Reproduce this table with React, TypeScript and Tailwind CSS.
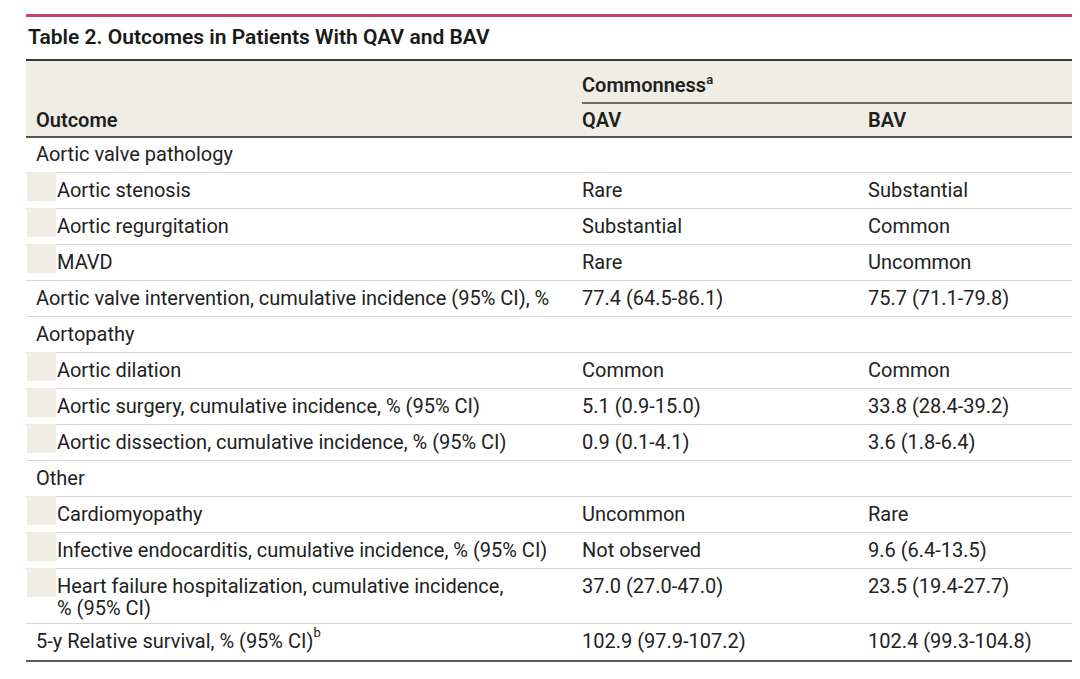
import React from "react";

type Row = {
  label: React.ReactNode;
  qav?: string;
  bav?: string;
  indent?: boolean;
  h: string;
  two?: boolean;
  last?: boolean;
};

const rows: Row[] = [
  { label: "Aortic valve pathology", h: "h-[35px]" },
  { label: "Aortic stenosis", qav: "Rare", bav: "Substantial", indent: true, h: "h-[36px]" },
  { label: "Aortic regurgitation", qav: "Substantial", bav: "Common", indent: true, h: "h-[36px]" },
  { label: "MAVD", qav: "Rare", bav: "Uncommon", indent: true, h: "h-[36px]" },
  {
    label: "Aortic valve intervention, cumulative incidence (95% CI), %",
    qav: "77.4 (64.5-86.1)",
    bav: "75.7 (71.1-79.8)",
    h: "h-[36px]",
  },
  { label: "Aortopathy", h: "h-[36px]" },
  { label: "Aortic dilation", qav: "Common", bav: "Common", indent: true, h: "h-[36px]" },
  {
    label: "Aortic surgery, cumulative incidence, % (95% CI)",
    qav: "5.1 (0.9-15.0)",
    bav: "33.8 (28.4-39.2)",
    indent: true,
    h: "h-[36px]",
  },
  {
    label: "Aortic dissection, cumulative incidence, % (95% CI)",
    qav: "0.9 (0.1-4.1)",
    bav: "3.6 (1.8-6.4)",
    indent: true,
    h: "h-[36px]",
  },
  { label: "Other", h: "h-[36px]" },
  { label: "Cardiomyopathy", qav: "Uncommon", bav: "Rare", indent: true, h: "h-[36px]" },
  {
    label: "Infective endocarditis, cumulative incidence, % (95% CI)",
    qav: "Not observed",
    bav: "9.6 (6.4-13.5)",
    indent: true,
    h: "h-[36px]",
  },
  {
    label: (
      <>
        Heart failure hospitalization, cumulative incidence,
        <br />% (95% CI)
      </>
    ),
    qav: "37.0 (27.0-47.0)",
    bav: "23.5 (19.4-27.7)",
    indent: true,
    h: "h-[55px]",
    two: true,
  },
  {
    label: (
      <>
        5-y Relative survival, % (95% CI)
        <sup className="relative -top-[3px] align-top text-[13px] leading-none">b</sup>
      </>
    ),
    qav: "102.9 (97.9-107.2)",
    bav: "102.4 (99.3-104.8)",
    h: "h-[38px]",
    last: true,
  },
];

export default function App() {
  return (
    <div
      className="w-[1080px] h-[679px] bg-white text-[#222222] text-[20px] leading-[24px]"
      style={{ fontFamily: "Roboto, 'Liberation Sans', sans-serif" }}
    >
      <div className="ml-[26px] w-[1046px] pt-[14px]">
        <div className="h-[3px] bg-[#c9416d]" />
        <div className="mt-[8px] h-[24px] pl-[2px] text-[21px] font-semibold leading-[24px] text-[#1a1a1a]">
          Table 2. Outcomes in Patients With QAV and BAV
        </div>
        <div className="mt-[10px] border-t-2 border-b-2 border-t-[#3a3a3a] border-b-[#555555] bg-[#efede4]">
          <div className="grid grid-cols-[546px_286px_1fr] font-semibold text-[#1f1f1f]">
            <div className="row-span-2 self-end pl-[10px] pb-[4px]">Outcome</div>
            <div className="col-span-2 ml-[10px] h-[43px] border-b-2 border-[#6b6b6b] pt-[12px]">
              Commonness
              <sup className="relative top-[0px] align-top text-[13px] leading-none">a</sup>
            </div>
            <div className="pl-[10px] pt-[4px] pb-[4px]">QAV</div>
            <div className="pl-[10px] pt-[4px] pb-[4px]">BAV</div>
          </div>
        </div>
        {rows.map((r, i) => (
          <div
            key={i}
            className={`grid grid-cols-[546px_286px_1fr] ${r.h} ${
              r.last ? "border-b-2 border-[#5b5b5b]" : "border-b border-[#d6d6d6]"
            }`}
          >
            {r.indent ? (
              <div className="flex">
                <div className="relative ml-[1px] -mt-px h-[29px] w-[29px] shrink-0 bg-[#efede4]" />
                <div className={`ml-[1px] ${r.two ? "pt-[6px] leading-[22px]" : "pt-[5px]"}`}>{r.label}</div>
              </div>
            ) : (
              <div className={`pl-[10px] ${i === 0 ? "pt-[4px]" : "pt-[5px]"} whitespace-nowrap`}>{r.label}</div>
            )}
            <div className="pl-[10px] pt-[5px]">{r.qav}</div>
            <div className="pl-[10px] pt-[5px]">{r.bav}</div>
          </div>
        ))}
      </div>
    </div>
  );
}
